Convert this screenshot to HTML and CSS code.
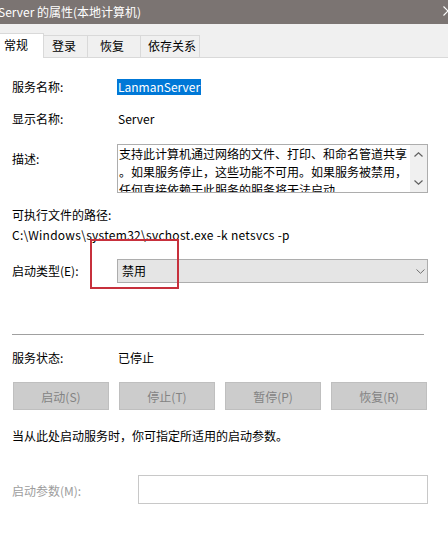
FILE: index.html
```html
<!DOCTYPE html>
<html lang="zh-CN">
<head>
<meta charset="utf-8">
<title>Server 的属性(本地计算机)</title>
<link rel="stylesheet" href="styles.css">
</head>
<body>
<div class="window">
  <div class="titlebar">
    <span class="title">Server 的属性(本地计算机)</span>
    <svg class="close" width="10" height="10" viewBox="0 0 10 10"><path d="M0.5 0.5 L9.5 9.5 M9.5 0.5 L0.5 9.5" stroke="#fff" stroke-width="1.1" fill="none"/></svg>
  </div>
  <div class="tabs">
    <div class="tab tab-general active">常规</div>
    <div class="tab tab-login">登录</div>
    <div class="tab tab-recover">恢复</div>
    <div class="tab tab-deps">依存关系</div>
  </div>
  <div class="panel">
    <div class="row r-name">
      <span class="label">服务名称:</span>
      <span class="value selected">LanmanServer</span>
    </div>
    <div class="row r-display">
      <span class="label">显示名称:</span>
      <span class="value">Server</span>
    </div>
    <div class="row r-desc">
      <span class="label desc-label">描述:</span>
      <div class="desc-box">
        <div class="desc-text">支持此计算机通过网络的文件、打印、和命名管道共享<br>。如果服务停止，这些功能不可用。如果服务被禁用，<br>任何直接依赖于此服务的服务将无法启动。</div>
        <div class="scrollbar">
          <svg width="9" height="5" viewBox="0 0 9 5"><path d="M0.5 4.5 L4.5 0.8 L8.5 4.5" stroke="#606060" stroke-width="1.2" fill="none"/></svg>
          <svg width="9" height="5" viewBox="0 0 9 5"><path d="M0.5 0.5 L4.5 4.2 L8.5 0.5" stroke="#606060" stroke-width="1.2" fill="none"/></svg>
        </div>
      </div>
    </div>
    <div class="row r-pathlabel"><span>可执行文件的路径:</span></div>
    <div class="row r-path"><span class="path">C:\Windows\system32\svchost.exe -k netsvcs -p</span></div>
    <div class="row r-start">
      <span class="label">启动类型(E):</span>
      <div class="select">
        <span>禁用</span>
        <svg width="9" height="5" viewBox="0 0 9 5"><path d="M0.5 0.5 L4.5 4.3 L8.5 0.5" stroke="#707070" stroke-width="1" fill="none"/></svg>
      </div>
    </div>
    <div class="separator"></div>
    <div class="row r-status">
      <span class="label">服务状态:</span>
      <span class="value">已停止</span>
    </div>
    <div class="buttons">
      <div class="btn">启动(S)</div>
      <div class="btn">停止(T)</div>
      <div class="btn">暂停(P)</div>
      <div class="btn">恢复(R)</div>
    </div>
    <div class="row r-hint"><span>当从此处启动服务时，你可指定所适用的启动参数。</span></div>
    <div class="row r-params">
      <span class="label disabled">启动参数(M):</span>
      <div class="input"></div>
    </div>
  </div>
  <div class="highlight-box"></div>
</div>
</body>
</html>
```
FILE: styles.css
```css
* { box-sizing: border-box; }
html, body { margin: 0; padding: 0; background: #fff; }
body {
  width: 448px;
  height: 539px;
  overflow: hidden;
  font-family: "Noto Sans CJK SC", "Noto Sans", sans-serif;
  font-size: 12px;
  color: #000;
}
.window { position: relative; width: 448px; height: 539px; background: #fff; }

.titlebar {
  height: 24px;
  background: #7b7472;
  color: #fff;
  display: flex;
  align-items: center;
  justify-content: space-between;
}
.title { margin-left: -2px; line-height: 22px; font-size: 12px; white-space: nowrap; }
.close { margin-right: -5px; margin-top: -2px; }

.tabs {
  height: 34px;
  background: #f0f0f0;
  border-bottom: 1px solid #d9d9d9;
  display: flex;
  align-items: flex-end;
}
.tab {
  height: 22px;
  line-height: 20px;
  border: 1px solid #d9d9d9;
  border-bottom: none;
  margin-left: -1px;
  background: #f0f0f0;
}
.tab.active {
  height: 25px;
  background: #fff;
  margin-bottom: -1px;
  line-height: 22px;
  position: relative;
  z-index: 1;
}
.tab-general { width: 45px; padding-left: 4px; }
.tab-login { width: 45px; padding-left: 8px; }
.tab-recover { width: 54px; padding-left: 12px; }
.tab-deps { width: 60px; padding-left: 7px; }

.panel { padding: 0 20px 0 12px; }
.row { display: flex; align-items: center; line-height: 16px; }
.label { width: 106px; flex: none; }
.selected { background: #0078d7; color: #fff; padding: 0 1px; margin-left: -1px; height: 16px; }

.r-name { margin-top: 21px; height: 16px; }
.r-display { margin-top: 16px; height: 16px; }
.r-desc { margin-top: 17px; align-items: flex-start; }
.desc-label { margin-top: 7px; width: 105px; }
.desc-box {
  flex: 1;
  height: 49px;
  border: 1px solid #adadad;
  display: flex;
  overflow: hidden;
}
.desc-text {
  flex: 1;
  padding: 0 3px 0 1px;
  line-height: 18px;
  height: 47px;
  overflow: hidden;
  white-space: nowrap;
}
.scrollbar {
  width: 17px;
  flex: none;
  background: #f0f0f0;
  display: flex;
  flex-direction: column;
  align-items: center;
  justify-content: space-between;
  padding: 7px 0 7px;
}
.r-pathlabel { margin-top: 14px; }
.r-path { margin-top: 4px; }
.path { letter-spacing: 0.28px; white-space: nowrap; }
.r-start { margin-top: 16px; height: 24px; }
.r-start .label { width: 105px; }
.select {
  flex: 1;
  height: 24px;
  background: #e5e5e5;
  border: 1px solid #adadad;
  display: flex;
  align-items: center;
  justify-content: space-between;
  padding: 0 2px 0 4px;
}
.separator { margin: 51px 4px 0 0; height: 1px; background: #a0a0a0; }
.r-status { margin-top: 15px; }
.buttons {
  margin: 16px 1px 0 1px;
  display: flex;
  justify-content: space-between;
}
.btn {
  width: 96px;
  height: 28px;
  background: #cccccc;
  border: 1px solid #bfbfbf;
  color: #838383;
  display: flex;
  align-items: center;
  justify-content: center;
}
.r-hint { margin-top: 18px; }
.r-params { margin-top: 31px; height: 29px; }
.r-params .label { width: 126px; margin-top: 3px; }
.disabled { color: #9d9d9d; }
.input { flex: 1; height: 29px; border: 1px solid #c8c8c8; background: #fff; }

.highlight-box {
  position: absolute;
  left: 90px;
  top: 239px;
  width: 89px;
  height: 50px;
  border: 2px solid #c7303c;
}
```
